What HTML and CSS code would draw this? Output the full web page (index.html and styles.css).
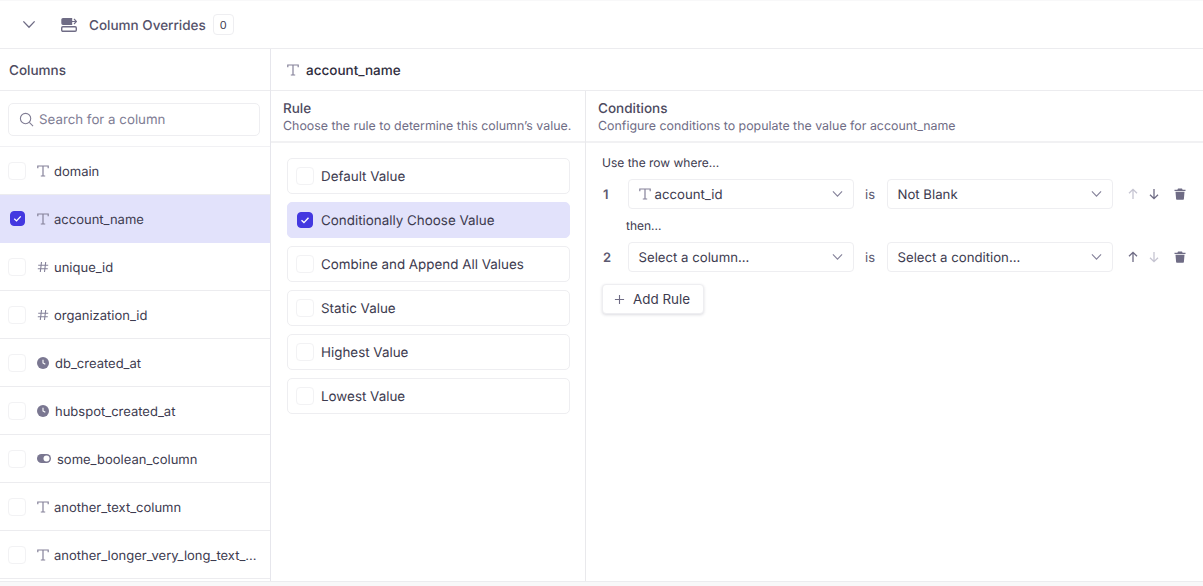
FILE: index.html
```html
<!DOCTYPE html>
<html lang="en">

<head>
    <meta charset="UTF-8">
    <title>Column Overrides</title>
    <link rel="stylesheet" href="styles.css">
</head>

<body>
    <svg class="defs" width="0" height="0">
        <symbol id="i-text" viewBox="0 0 12 12">
            <path d="M.8 3.200V1h10.400v2.200M6 1v10M3.800 11h4.400" fill="none" stroke="currentColor" stroke-width="1.200"/>
        </symbol>
        <symbol id="i-hash" viewBox="0 0 12 12">
            <path d="M4.500 1 3.300 11M8.700 1 7.500 11M1.200 4.200h10M.8 7.800h10" fill="none" stroke="currentColor" stroke-width="1.100"/>
        </symbol>
        <symbol id="i-clock" viewBox="0 0 12 12">
            <circle cx="6" cy="6" r="6" fill="currentColor"/>
            <path d="M6 2.800V6l2.300 1.300" fill="none" stroke="#fff" stroke-width="1.100"/>
        </symbol>
        <symbol id="i-toggle" viewBox="0 0 14 9">
            <rect width="14" height="9" rx="4.500" fill="currentColor"/>
            <circle cx="9.500" cy="4.500" r="3" fill="#fff"/>
        </symbol>
        <symbol id="i-check" viewBox="0 0 16 16">
            <path d="M4 8.400 6.800 11 12 5.400" fill="none" stroke="#fff" stroke-width="1.600"/>
        </symbol>
        <symbol id="i-chev" viewBox="0 0 12 8">
            <path d="M1 1.200 6 6.400l5-5.200" fill="none" stroke="currentColor" stroke-width="1.200"/>
        </symbol>
        <symbol id="i-up" viewBox="0 0 12 12">
            <path d="M6 11V1.500M2 5.300l4-4 4 4" fill="none" stroke="currentColor" stroke-width="1.300"/>
        </symbol>
        <symbol id="i-down" viewBox="0 0 12 12">
            <path d="M6 1v9.500M2 6.700l4 4 4-4" fill="none" stroke="currentColor" stroke-width="1.300"/>
        </symbol>
        <symbol id="i-trash" viewBox="0 0 12 12">
            <path d="M4 .5h4l.6 1.200H11.500V3H.5V1.700h2.900zM1.500 3.800h9l-.6 7.200a.8.8 0 0 1-.8.800H2.900a.8.8 0 0 1-.8-.8z" fill="currentColor"/>
        </symbol>
    </svg>

    <header class="topbar">
        <svg class="top-chev"><use href="#i-chev"/></svg>
        <svg class="top-icon" viewBox="0 0 16 14" fill="none" stroke="currentColor" stroke-width="1.400">
            <rect x=".7" y="8.700" width="14.600" height="4.600" rx="1.200"/>
            <path d="M1 1.800A1 1 0 0 1 2 .8h8.500v5.400H2a1 1 0 0 1-1-1z" fill="currentColor"/>
            <path d="M7 3.500h8.500M13 1l2.500 2.500L13 6" stroke-width="1.200"/>
        </svg>
        <span class="top-title txt">Column Overrides</span>
        <span class="count">0</span>
    </header>

    <main class="panes">
        <aside class="columns">
            <div class="columns-head"><span class="txt">Columns</span></div>
            <div class="search-wrap">
                <div class="search">
                    <svg class="search-icon" viewBox="0 0 16 16" fill="none" stroke="currentColor" stroke-width="1.200">
                        <circle cx="7" cy="7" r="5.500"/>
                        <path d="m11 11 4 4"/>
                    </svg>
                    <span>Search for a column</span>
                </div>
            </div>
            <ul class="col-list">
                <li class="col-row"><span class="box"></span><svg class="type"><use href="#i-text"/></svg><span class="txt">domain</span></li>
                <li class="col-row selected"><span class="box checked"><svg><use href="#i-check"/></svg></span><svg class="type"><use href="#i-text"/></svg><span class="txt">account_name</span></li>
                <li class="col-row"><span class="box"></span><svg class="type"><use href="#i-hash"/></svg><span class="txt">unique_id</span></li>
                <li class="col-row"><span class="box"></span><svg class="type"><use href="#i-hash"/></svg><span class="txt">organization_id</span></li>
                <li class="col-row"><span class="box"></span><svg class="type wide"><use href="#i-clock"/></svg><span class="txt">db_created_at</span></li>
                <li class="col-row"><span class="box"></span><svg class="type wide"><use href="#i-clock"/></svg><span class="txt">hubspot_created_at</span></li>
                <li class="col-row"><span class="box"></span><svg class="type wider"><use href="#i-toggle"/></svg><span class="txt">some_boolean_column</span></li>
                <li class="col-row"><span class="box"></span><svg class="type"><use href="#i-text"/></svg><span class="txt">another_text_column</span></li>
                <li class="col-row"><span class="box"></span><svg class="type"><use href="#i-text"/></svg><span class="txt">another_longer_very_long_text_...</span></li>
            </ul>
        </aside>

        <section class="detail">
            <div class="detail-head">
                <svg class="type"><use href="#i-text"/></svg>
                <span class="txt">account_name</span>
            </div>
            <div class="detail-body">
                <div class="rule-pane">
                    <div class="pane-head">
                        <h2>Rule</h2>
                        <p>Choose the rule to determine this column’s value.</p>
                    </div>
                    <div class="rule-list">
                        <div class="rule"><span class="box"></span><span class="txt">Default Value</span></div>
                        <div class="rule selected"><span class="box checked"><svg><use href="#i-check"/></svg></span><span class="txt">Conditionally Choose Value</span></div>
                        <div class="rule"><span class="box"></span><span class="txt">Combine and Append All Values</span></div>
                        <div class="rule"><span class="box"></span><span class="txt">Static Value</span></div>
                        <div class="rule"><span class="box"></span><span class="txt">Highest Value</span></div>
                        <div class="rule"><span class="box"></span><span class="txt">Lowest Value</span></div>
                    </div>
                </div>
                <div class="cond-pane">
                    <div class="pane-head">
                        <h2>Conditions</h2>
                        <p>Configure conditions to populate the value for account_name</p>
                    </div>
                    <div class="cond-body">
                        <div class="hint first">Use the row where...</div>
                        <div class="cond-row">
                            <span class="num txt">1</span>
                            <div class="select"><svg class="type"><use href="#i-text"/></svg><span class="txt">account_id</span><svg class="chev"><use href="#i-chev"/></svg></div>
                            <span class="is txt">is</span>
                            <div class="select"><span class="txt">Not Blank</span><svg class="chev"><use href="#i-chev"/></svg></div>
                            <div class="actions">
                                <svg class="off"><use href="#i-up"/></svg>
                                <svg><use href="#i-down"/></svg>
                                <svg class="trash"><use href="#i-trash"/></svg>
                            </div>
                        </div>
                        <div class="hint then">then...</div>
                        <div class="cond-row">
                            <span class="num txt">2</span>
                            <div class="select"><span class="txt">Select a column...</span><svg class="chev"><use href="#i-chev"/></svg></div>
                            <span class="is txt">is</span>
                            <div class="select"><span class="txt">Select a condition...</span><svg class="chev"><use href="#i-chev"/></svg></div>
                            <div class="actions">
                                <svg><use href="#i-up"/></svg>
                                <svg class="off"><use href="#i-down"/></svg>
                                <svg class="trash"><use href="#i-trash"/></svg>
                            </div>
                        </div>
                        <button class="add-rule">
                            <svg viewBox="0 0 12 12" fill="none" stroke="currentColor" stroke-width="1.200"><path d="M6 1v10M1 6h10"/></svg>
                            Add Rule
                        </button>
                    </div>
                </div>
            </div>
        </section>
    </main>
</body>

</html>
```

FILE: styles.css
```css
* {
    box-sizing: border-box;
}

html, body {
    margin: 0;
    padding: 0;
    height: 100%;
}

body {
    display: flex;
    flex-direction: column;
    overflow: hidden;
    padding-top: 1px;
    padding-bottom: 4px;
    background-color: #f8f8f9;
    font-family: Inter, "Liberation Sans", sans-serif;
    font-size: 13px;
    color: #3d3b4f;
    text-rendering: geometricPrecision;
}

.defs {
    position: absolute;
}

/* text in a centered row sits a pixel low in the design */
.txt {
    padding-top: 2px;
}

.topbar {
    flex: none;
    display: flex;
    align-items: center;
    height: 48px;
    background-color: #fff;
    border-bottom: 1px solid #ececef;
}

.top-chev {
    width: 14px;
    height: 9px;
    margin-left: 22px;
    color: #6f6c85;
}

.top-icon {
    width: 16px;
    height: 14px;
    margin-left: 25px;
    color: #6f6c85;
}

.top-title {
    margin-left: 12px;
    font-size: 13.500px;
    font-weight: 500;
    color: #55526a;
}

.count {
    display: flex;
    align-items: center;
    justify-content: center;
    width: 21px;
    height: 21px;
    margin-left: 7px;
    border: 1px solid #eeeef1;
    border-radius: 4px;
    font-size: 11px;
}

.panes {
    flex: 1;
    min-height: 0;
    display: flex;
    background-color: #fff;
    border-bottom: 1px solid #ececef;
}

.columns {
    flex: none;
    width: 271px;
    border-right: 1px solid #e6e6ec;
    overflow: hidden;
}

.columns-head {
    display: flex;
    align-items: center;
    height: 42px;
    padding-left: 9px;
    border-bottom: 1px solid #ececef;
    font-size: 13.500px;
    font-weight: 500;
    color: #4d4a60;
}

.search-wrap {
    height: 56px;
    padding: 12px 10px 0 8px;
    border-bottom: 1px solid #f1f1f4;
}

.search {
    display: flex;
    align-items: center;
    height: 33px;
    padding-left: 10px;
    border: 1px solid #eeeef1;
    border-radius: 5px;
    font-size: 13.300px;
    color: #807d94;
}

.search-icon {
    width: 15px;
    height: 15px;
    margin-right: 5px;
}

.col-list {
    margin: 0;
    padding: 0;
    list-style: none;
}

.col-row {
    display: flex;
    align-items: center;
    height: 48px;
    padding-left: 8px;
    border-bottom: 1px solid #ececef;
}

.col-row.selected {
    background-color: #e2e2fb;
    border-bottom-color: #e2e2fb;
}

.box {
    flex: none;
    display: block;
    width: 18px;
    height: 18px;
    border: 1px solid #f2f2f4;
    border-radius: 4px;
    background-color: #fff;
}

.box.checked {
    width: 15px;
    height: 15px;
    margin: 1.500px;
    background-color: #4338e0;
    border-color: #4338e0;
}

.box svg {
    display: block;
    width: 100%;
    height: 100%;
}

.col-row .box {
    margin-right: 10px;
}

.col-row .box.checked {
    margin: 1.500px 11.500px 1.500px 1.500px;
}

.type {
    flex: none;
    width: 12px;
    height: 12px;
    margin-left: 1px;
    margin-right: 5px;
    color: #85829a;
}

.type.wide {
    margin-right: 6px;
    color: #7a7791;
}

.type.wider {
    width: 14px;
    height: 9px;
    margin-right: 6px;
    color: #7a7791;
}

.detail {
    flex: 1;
    min-width: 0;
    display: flex;
    flex-direction: column;
}

.detail-head {
    flex: none;
    display: flex;
    align-items: center;
    height: 42px;
    padding-left: 15px;
    border-bottom: 1px solid #ececef;
    font-size: 13.500px;
    font-weight: 500;
    color: #2f2d3d;
}

.detail-head .type {
    margin-right: 7px;
}

.detail-body {
    flex: 1;
    display: flex;
}

.rule-pane {
    flex: none;
    width: 315px;
    border-right: 1px solid #e9e9ec;
}

.cond-pane {
    flex: 1;
}

.pane-head {
    height: 52px;
    padding: 10px 12px 0;
    border-bottom: 2px solid #f1f1f3;
}

.pane-head h2 {
    margin: 0 0 1px;
    font-size: 13.500px;
    line-height: 16px;
    font-weight: 500;
    color: #4d4a60;
}

.pane-head p {
    margin: 0;
    font-size: 12.400px;
    line-height: 16px;
    color: #6f6c85;
}

.rule-list {
    display: flex;
    flex-direction: column;
    gap: 8px;
    padding: 15px 15px 0 16px;
    font-size: 13.400px;
}

.rule {
    display: flex;
    align-items: center;
    gap: 7px;
    height: 36px;
    padding-left: 8px;
    border: 1px solid #eeeef1;
    border-radius: 5px;
}

.rule.selected {
    background-color: #e2e2fb;
    border-color: #e2e2fb;
}

.rule .box.checked {
    width: 16px;
    height: 16px;
    margin: 1px;
}

.cond-body {
    padding: 12px 0 0 16px;
}

.hint {
    font-size: 12px;
    line-height: 16px;
}

.first {
    margin-bottom: 8px;
}

.then {
    margin: 9px 0 8px 24px;
}

.cond-row {
    display: flex;
    align-items: center;
    height: 30px;
    margin-left: 1px;
}

.num {
    width: 24.500px;
    font-weight: 600;
    color: #5c5970;
}

.select {
    display: flex;
    align-items: center;
    width: 226px;
    height: 30px;
    padding-left: 10px;
    border: 1px solid #eeeef1;
    border-radius: 4px;
    font-size: 13.200px;
}

.select .type {
    margin-left: 0;
    margin-right: 4px;
}

.chev {
    width: 11px;
    height: 8px;
    margin-left: auto;
    margin-right: 10px;
    color: #85829a;
}

.is {
    width: 33px;
    text-align: center;
    color: #5c5970;
}

.actions {
    display: flex;
    align-items: center;
    margin-left: 14px;
    gap: 9px;
    color: #6f6c85;
}

.actions svg {
    width: 12px;
    height: 12px;
}

.actions .off {
    color: #c6c5d2;
}

.actions .trash {
    margin-left: 5px;
}

.add-rule {
    display: flex;
    align-items: center;
    gap: 8px;
    width: 102px;
    height: 30px;
    margin-top: 12px;
    padding: 0 0 0 11px;
    border: 1px solid #eeeef1;
    border-radius: 4px;
    background-color: #fff;
    box-shadow: 0 1px 3px rgba(40, 40, 70, 0.16);
    font: inherit;
    font-size: 13.400px;
    color: #3d3b4f;
}

.add-rule svg {
    width: 11px;
    height: 11px;
    color: #6f6c85;
}
```
